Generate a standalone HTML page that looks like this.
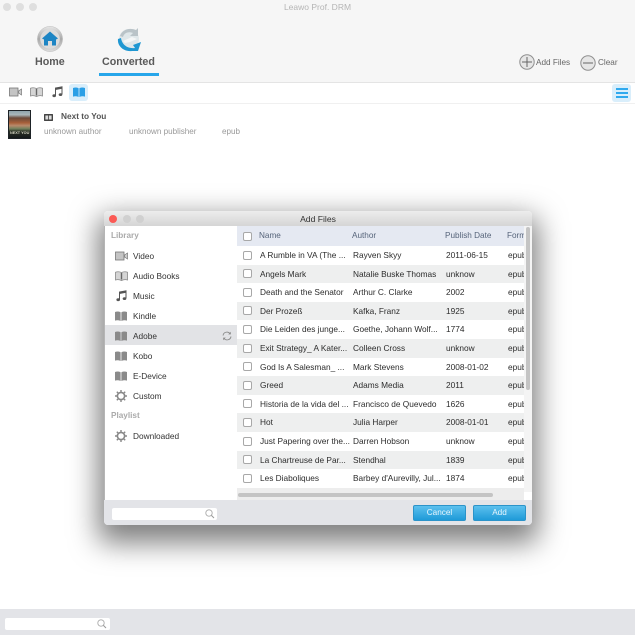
<!DOCTYPE html>
<html>
<head>
<meta charset="utf-8">
<style>
html,body{margin:0;padding:0;width:635px;height:635px;overflow:hidden;background:#fff;font-family:"Liberation Sans",sans-serif;}
.a{position:absolute;white-space:nowrap;}
svg{position:absolute;overflow:visible;}
.dot{position:absolute;width:8px;height:8px;border-radius:50%;background:#dfdfdf;}
.side{position:absolute;left:133px;font-size:8.3px;color:#333;white-space:nowrap;line-height:10px;}
.row{position:absolute;left:237px;width:287px;height:18.6px;}
.row.g{background:#eeefef;}
.cb{position:absolute;left:6px;top:4.5px;width:7px;height:7px;border:1px solid #a8a8a8;border-radius:2px;background:#fff;}
.c{position:absolute;top:4px;font-size:8.3px;color:#2c2c2c;white-space:nowrap;line-height:10px;}
.c1{left:23px}.c2{left:116px}.c3{left:209px}.c4{left:271px;width:16px;overflow:hidden}
.hd{position:absolute;top:5px;font-size:8.2px;color:#56647a;white-space:nowrap;line-height:10px;}
.btn{position:absolute;top:505px;width:51px;height:14px;border-radius:2px;border:1px solid #2b93c9;background:linear-gradient(#5cc0ee,#1f9ad8);color:#e8f6fd;font-size:8.2px;line-height:14px;text-align:center;}
</style>
</head>
<body>
<!-- top bar -->
<div class="a" style="left:0;top:0;width:635px;height:82px;background:#f6f6f6;border-bottom:1px solid #e4e4e4;"></div>
<div class="dot" style="left:3px;top:3px;"></div>
<div class="dot" style="left:16px;top:3px;"></div>
<div class="dot" style="left:29px;top:3px;"></div>
<div class="a" style="left:0;width:635px;top:2px;text-align:center;font-size:8.5px;color:#b5b5b5;line-height:10px;">Leawo Prof. DRM</div>

<!-- Home icon -->
<svg style="left:37px;top:26px" width="26" height="26" viewBox="0 0 26 26">
<defs><linearGradient id="m" x1="0" y1="0" x2="0" y2="1"><stop offset="0" stop-color="#e6e6e6"/><stop offset=".5" stop-color="#a9a9a9"/><stop offset="1" stop-color="#dcdcdc"/></linearGradient></defs>
<circle cx="13" cy="13" r="12.6" fill="url(#m)" stroke="#bdbdbd" stroke-width=".5"/>
<circle cx="13" cy="13" r="9.8" fill="#dcdcdc"/>
<path d="M13 5.5L21 12.5L19 13.5V19.5H15V15H11V19.5H7V13.5L5 12.5Z" fill="#1d85c4"/>
</svg>
<div class="a" style="left:35px;top:56px;font-size:10.7px;font-weight:bold;color:#5a5a5a;line-height:13px;">Home</div>

<!-- Converted icon -->
<svg style="left:116px;top:27px" width="26" height="26" viewBox="0 0 26 26">
<circle cx="13" cy="12" r="10" fill="#dfe7ea"/>
<path d="M2 12C1 19 8 25 16 24L22 24L25 15L17 18L19 21C12 22 6 18 5 11Z" fill="#1f97d2"/>
<path d="M4 9C6 3 13 0 20 3L22 1L22 9L14 9L17 6C12 4 8 6 7 10Z" fill="#b9c3c8"/>
<path d="M7 14L16 10L21 12L14 15L9 16Z" fill="#f4f6f7"/>
</svg>
<div class="a" style="left:102px;top:56px;font-size:10.7px;font-weight:bold;color:#5a5a5a;line-height:13px;">Converted</div>
<div class="a" style="left:99px;top:73px;width:60px;height:3px;background:#27a6ea;"></div>

<!-- Add / Clear -->
<svg style="left:519px;top:54px" width="16" height="16" viewBox="0 0 16 16">
<circle cx="8" cy="8" r="7.2" fill="#e6e6e6" stroke="#8f8f8f"/>
<path d="M8 3V13M3 8H13" stroke="#666" stroke-width="1"/>
</svg>
<div class="a" style="left:536px;top:57.5px;font-size:8.2px;color:#666;line-height:10px;">Add Files</div>
<svg style="left:580px;top:55px" width="16" height="16" viewBox="0 0 16 16">
<circle cx="8" cy="8" r="7.2" fill="#e6e6e6" stroke="#8f8f8f"/>
<path d="M3 8H13" stroke="#666" stroke-width="1"/>
</svg>
<div class="a" style="left:598px;top:57.5px;font-size:8.2px;color:#666;line-height:10px;">Clear</div>

<!-- toolbar -->
<div class="a" style="left:0;top:103px;width:635px;height:1px;background:#f0f0f0;"></div>
<svg style="left:9px;top:87px" width="13" height="10" viewBox="0 0 13 10">
<rect x=".5" y="1" width="8.5" height="8" fill="#c4c4c4" stroke="#777" stroke-width=".8"/>
<path d="M9.5 4L12.5 2V8L9.5 6Z" fill="#ccc" stroke="#777" stroke-width=".7"/>
</svg>
<svg style="left:30px;top:87px" width="13" height="10" viewBox="0 0 13 10">
<path d="M.5 1.2Q3.5 .2 6.5 1.5Q9.5 .2 12.5 1.2V9Q9.5 8 6.5 9.5Q3.5 8 .5 9Z" fill="#d5d5d5" stroke="#888" stroke-width=".8"/>
<path d="M6.5 2V8.5" stroke="#666" stroke-width="1.4"/>
</svg>
<svg style="left:52px;top:86px" width="11" height="12" viewBox="0 0 11 12">
<path d="M3.5 9.5V2L10 .8V8.3" fill="none" stroke="#555" stroke-width="1"/>
<path d="M3.5 2L10 .8V2.8L3.5 4Z" fill="#555"/>
<ellipse cx="2.2" cy="9.7" rx="1.8" ry="1.4" fill="#555"/>
<ellipse cx="8.5" cy="8.6" rx="1.8" ry="1.4" fill="#555"/>
</svg>
<div class="a" style="left:69px;top:84px;width:19px;height:17px;border-radius:3px;background:#d9eefb;"></div>
<svg style="left:73px;top:87px" width="12" height="10" viewBox="0 0 12 10">
<path d="M0 1Q3 0 5.6 1.2V10Q3 8.8 0 9.6ZM6.4 1.2Q9 0 12 1V9.6Q9 8.8 6.4 10Z" fill="#2a9fe6"/>
</svg>
<div class="a" style="left:612px;top:84px;width:19px;height:18px;border-radius:3px;background:#d9eefb;"></div>
<div class="a" style="left:616px;top:88px;width:12px;height:2px;background:#2fa9ee;"></div>
<div class="a" style="left:616px;top:92px;width:12px;height:2px;background:#2fa9ee;"></div>
<div class="a" style="left:616px;top:96px;width:12px;height:2px;background:#2fa9ee;"></div>

<!-- list item -->
<div class="a" style="left:8px;top:110px;width:23px;height:29px;background:#1d2226;overflow:hidden;">
<div class="a" style="left:1px;top:1px;width:21px;height:27px;background:linear-gradient(#8fa4ad 0,#a9b6ba 14%,#6b4a3a 26%,#a8603a 44%,#b98a6c 54%,#6f7f5c 66%,#2a3026 76%,#14181a 100%);"></div>
<div class="a" style="left:2px;top:21px;font-size:3.8px;color:#d6d6c4;font-weight:bold;line-height:5px;">NEXT YOU</div>
</div>
<svg style="left:44px;top:114px" width="9" height="7" viewBox="0 0 9 7">
<rect width="9" height="7" rx=".6" fill="#444"/><rect x="1.4" y="1.5" width="2.7" height="4" fill="#ddd"/><rect x="4.9" y="1.5" width="2.7" height="4" fill="#ddd"/>
</svg>
<div class="a" style="left:61px;top:111px;font-size:8.3px;font-weight:bold;color:#555;line-height:10px;">Next to You</div>
<div class="a" style="left:44px;top:127px;font-size:8.1px;color:#999;line-height:10px;">unknown author</div>
<div class="a" style="left:129px;top:127px;font-size:8.1px;color:#999;line-height:10px;">unknown publisher</div>
<div class="a" style="left:222px;top:127px;font-size:8.1px;color:#999;line-height:10px;">epub</div>

<!-- bottom bar -->
<div class="a" style="left:0;top:609px;width:635px;height:26px;background:#e3e4e8;"></div>
<div class="a" style="left:5px;top:618px;width:105px;height:12px;border-radius:2px;background:#fff;"></div>
<svg style="left:97px;top:619px" width="10" height="10" viewBox="0 0 10 10"><circle cx="4" cy="4" r="3.2" fill="none" stroke="#aaa" stroke-width=".9"/><path d="M6.4 6.4L9 9" stroke="#999"/></svg>

<!-- dialog -->
<div class="a" style="left:104px;top:211px;width:428px;height:314px;background:#fff;border-radius:4px;box-shadow:0 12px 28px 6px rgba(0,0,0,.5);"></div>
<div class="a" style="left:104px;top:211px;width:428px;height:15px;border-radius:4px 4px 0 0;background:linear-gradient(#ededed,#d5d5d5);"></div>
<div class="dot" style="left:109px;top:215px;background:#fb5a55;"></div>
<div class="dot" style="left:123px;top:215px;background:#d0d0d0;"></div>
<div class="dot" style="left:136px;top:215px;background:#d0d0d0;"></div>
<div class="a" style="left:104px;width:428px;top:214px;text-align:center;font-size:8.6px;color:#333;line-height:10px;">Add Files</div>

<!-- sidebar -->
<div class="a" style="left:104px;top:226px;width:1px;height:274px;background:#b5b5b5;"></div>
<div class="a" style="left:111px;top:231px;font-size:8.2px;font-weight:bold;color:#aaa;line-height:10px;">Library</div>
<div class="a" style="left:105px;top:325px;width:132px;height:20px;background:#e2e3e6;"></div>
<svg style="left:115px;top:251px" width="13" height="10" viewBox="0 0 13 10"><rect x=".5" y="1" width="8.5" height="8" fill="#c4c4c4" stroke="#777" stroke-width=".8"/><path d="M9.5 4L12.5 2V8L9.5 6Z" fill="#ccc" stroke="#777" stroke-width=".7"/></svg>
<div class="side" style="top:251px;">Video</div>
<svg style="left:115px;top:271px" width="13" height="10" viewBox="0 0 13 10"><path d="M.5 1.2Q3.5 .2 6.5 1.5Q9.5 .2 12.5 1.2V9Q9.5 8 6.5 9.5Q3.5 8 .5 9Z" fill="#d5d5d5" stroke="#888" stroke-width=".8"/><path d="M6.5 2V8.5" stroke="#666" stroke-width="1.4"/></svg>
<div class="side" style="top:271px;">Audio Books</div>
<svg style="left:116px;top:290px" width="11" height="12" viewBox="0 0 11 12"><path d="M3.5 9.5V2L10 .8V8.3" fill="none" stroke="#555" stroke-width="1"/><path d="M3.5 2L10 .8V2.8L3.5 4Z" fill="#555"/><ellipse cx="2.2" cy="9.7" rx="1.8" ry="1.4" fill="#555"/><ellipse cx="8.5" cy="8.6" rx="1.8" ry="1.4" fill="#555"/></svg>
<div class="side" style="top:291px;">Music</div>
<svg style="left:115px;top:311px" width="12" height="10" viewBox="0 0 12 10"><path d="M0 1Q3 0 5.6 1.2V10Q3 8.8 0 9.6ZM6.4 1.2Q9 0 12 1V9.6Q9 8.8 6.4 10Z" fill="#8a8a8a"/></svg>
<div class="side" style="top:311px;">Kindle</div>
<svg style="left:115px;top:331px" width="12" height="10" viewBox="0 0 12 10"><path d="M0 1Q3 0 5.6 1.2V10Q3 8.8 0 9.6ZM6.4 1.2Q9 0 12 1V9.6Q9 8.8 6.4 10Z" fill="#8a8a8a"/></svg>
<div class="side" style="top:331px;">Adobe</div>
<svg style="left:222px;top:331px" width="10" height="10" viewBox="0 0 10 10"><path d="M1 4.5A4 4 0 0 1 8 2.5M9 5.5A4 4 0 0 1 2 7.5" fill="none" stroke="#888" stroke-width=".9"/><path d="M8.8 .8V3.4H6.2ZM1.2 9.2V6.6H3.8Z" fill="#888"/></svg>
<svg style="left:115px;top:371px" width="12" height="10" viewBox="0 0 12 10"><path d="M0 1Q3 0 5.6 1.2V10Q3 8.8 0 9.6ZM6.4 1.2Q9 0 12 1V9.6Q9 8.8 6.4 10Z" fill="#8a8a8a"/></svg>
<svg style="left:115px;top:351px" width="12" height="10" viewBox="0 0 12 10"><path d="M0 1Q3 0 5.6 1.2V10Q3 8.8 0 9.6ZM6.4 1.2Q9 0 12 1V9.6Q9 8.8 6.4 10Z" fill="#8a8a8a"/></svg>
<div class="side" style="top:351px;">Kobo</div>
<div class="side" style="top:371px;">E-Device</div>
<svg style="left:115px;top:390px" width="12" height="12" viewBox="0 0 12 12"><circle cx="6" cy="6" r="3.6" fill="none" stroke="#888" stroke-width="1.6"/><path d="M6 0V2.4M6 9.6V12M0 6H2.4M9.6 6H12M1.8 1.8L3.4 3.4M8.6 8.6L10.2 10.2M10.2 1.8L8.6 3.4M3.4 8.6L1.8 10.2" stroke="#888" stroke-width="1.4"/></svg>
<div class="side" style="top:391px;">Custom</div>
<div class="a" style="left:111px;top:410.5px;font-size:8.2px;font-weight:bold;color:#aaa;line-height:10px;">Playlist</div>
<svg style="left:115px;top:430px" width="12" height="12" viewBox="0 0 12 12"><circle cx="6" cy="6" r="3.6" fill="none" stroke="#888" stroke-width="1.6"/><path d="M6 0V2.4M6 9.6V12M0 6H2.4M9.6 6H12M1.8 1.8L3.4 3.4M8.6 8.6L10.2 10.2M10.2 1.8L8.6 3.4M3.4 8.6L1.8 10.2" stroke="#888" stroke-width="1.4"/></svg>
<div class="side" style="top:431px;">Downloaded</div>

<!-- table header -->
<div class="row" style="top:226px;height:20px;background:#e5e9f2;">
<div class="cb" style="left:6px;top:5.5px;"></div>
<div class="hd" style="left:22px;">Name</div>
<div class="hd" style="left:115px;">Author</div>
<div class="hd" style="left:208px;">Publish Date</div>
<div class="hd" style="left:270px;width:17px;overflow:hidden;">Form</div>
</div>

<div class="row" style="top:246px;"><div class="cb"></div><div class="c c1">A Rumble in VA (The ...</div><div class="c c2">Rayven Skyy</div><div class="c c3">2011-06-15</div><div class="c c4">epub</div></div>
<div class="row g" style="top:264.6px;"><div class="cb"></div><div class="c c1">Angels Mark</div><div class="c c2">Natalie Buske Thomas</div><div class="c c3">unknow</div><div class="c c4">epub</div></div>
<div class="row" style="top:283.2px;"><div class="cb"></div><div class="c c1">Death and the Senator</div><div class="c c2">Arthur C. Clarke</div><div class="c c3">2002</div><div class="c c4">epub</div></div>
<div class="row g" style="top:301.8px;"><div class="cb"></div><div class="c c1">Der Prozeß</div><div class="c c2">Kafka, Franz</div><div class="c c3">1925</div><div class="c c4">epub</div></div>
<div class="row" style="top:320.4px;"><div class="cb"></div><div class="c c1">Die Leiden des junge...</div><div class="c c2">Goethe, Johann Wolf...</div><div class="c c3">1774</div><div class="c c4">epub</div></div>
<div class="row g" style="top:339px;"><div class="cb"></div><div class="c c1">Exit Strategy_ A Kater...</div><div class="c c2">Colleen Cross</div><div class="c c3">unknow</div><div class="c c4">epub</div></div>
<div class="row" style="top:357.6px;"><div class="cb"></div><div class="c c1">God Is A Salesman_ ...</div><div class="c c2">Mark Stevens</div><div class="c c3">2008-01-02</div><div class="c c4">epub</div></div>
<div class="row g" style="top:376.2px;"><div class="cb"></div><div class="c c1">Greed</div><div class="c c2">Adams Media</div><div class="c c3">2011</div><div class="c c4">epub</div></div>
<div class="row" style="top:394.8px;"><div class="cb"></div><div class="c c1">Historia de la vida del ...</div><div class="c c2">Francisco de Quevedo</div><div class="c c3">1626</div><div class="c c4">epub</div></div>
<div class="row g" style="top:413.4px;"><div class="cb"></div><div class="c c1">Hot</div><div class="c c2">Julia Harper</div><div class="c c3">2008-01-01</div><div class="c c4">epub</div></div>
<div class="row" style="top:432px;"><div class="cb"></div><div class="c c1">Just Papering over the...</div><div class="c c2">Darren Hobson</div><div class="c c3">unknow</div><div class="c c4">epub</div></div>
<div class="row g" style="top:450.6px;"><div class="cb"></div><div class="c c1">La Chartreuse de Par...</div><div class="c c2">Stendhal</div><div class="c c3">1839</div><div class="c c4">epub</div></div>
<div class="row" style="top:469.2px;"><div class="cb"></div><div class="c c1">Les Diaboliques</div><div class="c c2">Barbey d'Aurevilly, Jul...</div><div class="c c3">1874</div><div class="c c4">epub</div></div>

<!-- scrollbars -->
<div class="a" style="left:237px;top:488px;width:287px;height:12px;background:#ededed;"></div>
<div class="a" style="left:238px;top:493px;width:255px;height:4px;border-radius:2px;background:#c4c4c4;"></div>
<div class="a" style="left:524px;top:226px;width:8px;height:266px;background:#f4f4f4;"></div>
<div class="a" style="left:526px;top:227px;width:4px;height:163px;border-radius:2px;background:#c4c4c4;"></div>
<div class="a" style="left:524px;top:492px;width:8px;height:8px;background:#fff;border:0;"></div>

<!-- footer -->
<div class="a" style="left:104px;top:500px;width:428px;height:25px;background:#e3e4e8;border-radius:0 0 4px 4px;"></div>
<div class="a" style="left:112px;top:508px;width:105px;height:12px;border-radius:2px;background:#fff;"></div>
<svg style="left:205px;top:509px" width="10" height="10" viewBox="0 0 10 10"><circle cx="4" cy="4" r="3.2" fill="none" stroke="#aaa" stroke-width=".9"/><path d="M6.4 6.4L9 9" stroke="#999"/></svg>
<div class="btn" style="left:413px;">Cancel</div>
<div class="btn" style="left:473px;">Add</div>
</body>
</html>
